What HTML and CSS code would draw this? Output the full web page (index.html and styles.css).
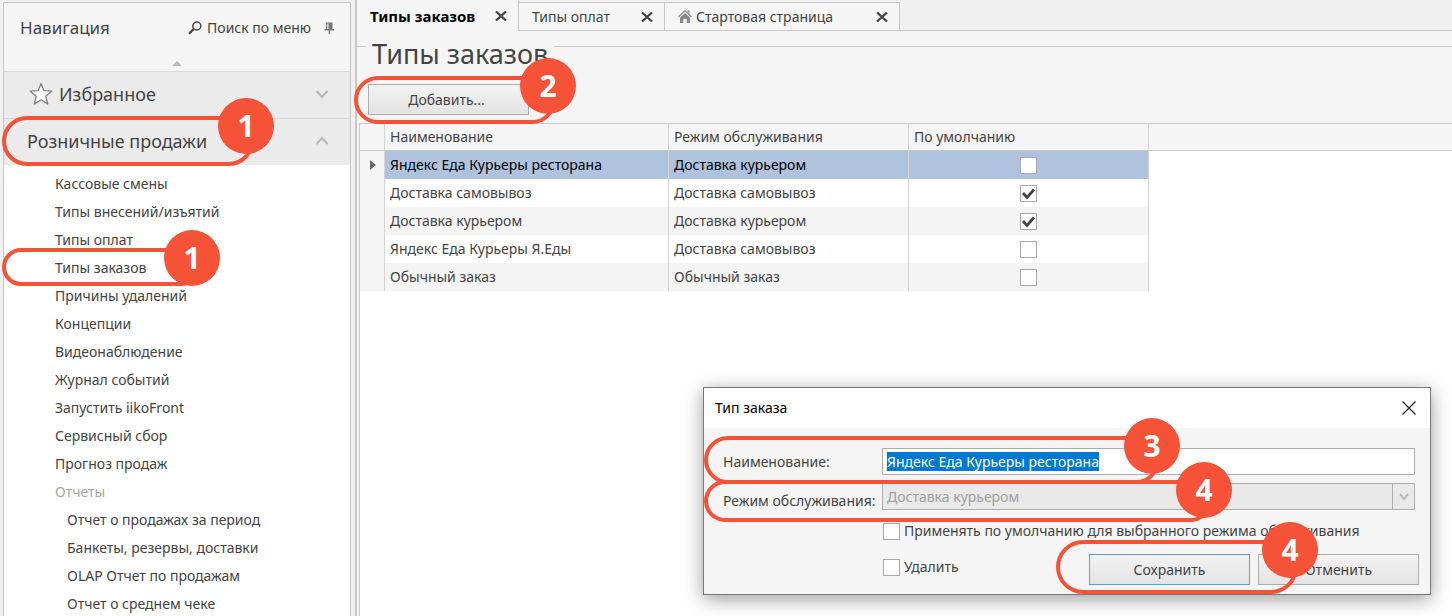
FILE: index.html
```html
<!DOCTYPE html>
<html lang="ru">
<head>
<meta charset="utf-8">
<title>Типы заказов</title>
<link rel="stylesheet" href="styles.css">
</head>
<body>
<div class="app">
  <aside class="sidebar">
    <header class="sidebar-head">
      <h2 class="sidebar-title">Навигация</h2>
      <button class="menu-search" type="button">
        <svg width="14" height="14" viewBox="0 0 14 14" fill="none" stroke="#444"><circle cx="8.800" cy="5" r="4" stroke-width="1.500"/><path d="M5.800 8 1 12.800" stroke-width="2.200"/></svg>
        Поиск по меню
      </button>
      <button class="pin" type="button" aria-label="Закрепить">
        <svg width="10" height="12" viewBox="0 0 10 12"><path d="M2 .5h6.500v6.500H10v1.500H.5V7H2z" fill="#777"/><path d="M3.200 1.500h1.300V7H3.200z" fill="#eee"/><path d="M4.700 8h1.200v4H4.700z" fill="#777"/></svg>
      </button>
      <svg class="scroll-up" width="10" height="5" viewBox="0 0 10 5"><path d="M0 5 5 0l5 5z" fill="#b9b9b9"/></svg>
    </header>
    <button class="section" type="button">
      <svg class="star" width="24" height="24" viewBox="0 0 24 24"><path d="m12 1.500 2.900 7.200 7.800.5-6 5 2 7.800L12 17.800 5.300 22l2-7.800-6-5 7.800-.5z" fill="#fff" stroke="#808080" stroke-width="1.300" stroke-linejoin="round"/></svg>
      <span>Избранное</span>
      <svg class="chevron" width="14" height="10" viewBox="0 0 14 10"><path d="m1.500 2 5.500 6 5.500-6" fill="none" stroke="#b8b8b8" stroke-width="2"/></svg>
    </button>
    <button class="section section-open" type="button">
      <span>Розничные продажи</span>
      <svg class="chevron" width="14" height="10" viewBox="0 0 14 10"><path d="m1.500 8 5.500-6 5.500 6" fill="none" stroke="#b8b8b8" stroke-width="2"/></svg>
      <span class="callout callout-section"><b class="badge">1</b></span>
    </button>
    <ul class="menu">
      <li><a href="#">Кассовые смены</a></li>
      <li><a href="#">Типы внесений/изъятий</a></li>
      <li><a href="#">Типы оплат</a></li>
      <li class="marked"><a href="#">Типы заказов</a><span class="callout callout-item"><b class="badge">1</b></span></li>
      <li><a href="#">Причины удалений</a></li>
      <li><a href="#">Концепции</a></li>
      <li><a href="#">Видеонаблюдение</a></li>
      <li><a href="#">Журнал событий</a></li>
      <li><a href="#">Запустить iikoFront</a></li>
      <li><a href="#">Сервисный сбор</a></li>
      <li><a href="#">Прогноз продаж</a></li>
      <li class="group">Отчеты</li>
      <li class="sub"><a href="#">Отчет о продажах за период</a></li>
      <li class="sub"><a href="#">Банкеты, резервы, доставки</a></li>
      <li class="sub"><a href="#">OLAP Отчет по продажам</a></li>
      <li class="sub"><a href="#">Отчет о среднем чеке</a></li>
    </ul>
  </aside>

  <main class="main">
    <nav class="tabs">
      <div class="tab tab-active"><a href="#">Типы заказов</a><button type="button" aria-label="Закрыть"><svg width="12" height="10" viewBox="0 0 12 10"><path d="m1 .5 10 9m0-9-10 9" stroke="#444" stroke-width="2.200"/></svg></button></div>
      <div class="tab tab-pay"><a href="#">Типы оплат</a><button type="button" aria-label="Закрыть"><svg width="12" height="10" viewBox="0 0 12 10"><path d="m1 .5 10 9m0-9-10 9" stroke="#444" stroke-width="2.200"/></svg></button></div>
      <div class="tab tab-start"><svg class="home" width="14" height="15" viewBox="0 0 14 15"><path d="M0 7.500 7 .5l2.500 2.500V1.200h2v3.700L14 7.500l-1 1-6-5.800L1 8.500z" fill="#999"/><path d="m2 8.800 5-4.800 5 4.800V14H8.700v-4H5.300v4H2z" fill="#888"/></svg><a href="#">Стартовая страница</a><button type="button" aria-label="Закрыть"><svg width="12" height="10" viewBox="0 0 12 10"><path d="m1 .5 10 9m0-9-10 9" stroke="#444" stroke-width="2.200"/></svg></button></div>
    </nav>
    <section class="panel">
      <h1 class="panel-title">Типы заказов</h1>
      <div class="toolbar">
        <button class="btn btn-add" type="button">Добавить...</button>
        <span class="callout callout-add"><b class="badge">2</b></span>
      </div>
      <div class="grid-wrap">
        <table class="grid">
          <colgroup><col class="c-mark"><col class="c-name"><col class="c-mode"><col class="c-default"><col></colgroup>
          <thead><tr><th></th><th>Наименование</th><th>Режим обслуживания</th><th>По умолчанию</th><th></th></tr></thead>
          <tbody>
            <tr class="selected"><td><svg width="6" height="10" viewBox="0 0 6 10"><path d="M0 0l6 5-6 5z" fill="#666"/></svg></td><td>Яндекс Еда Курьеры ресторана</td><td>Доставка курьером</td><td><input type="checkbox" aria-label="По умолчанию"></td><td></td></tr>
            <tr><td></td><td>Доставка самовывоз</td><td>Доставка самовывоз</td><td><input type="checkbox" aria-label="По умолчанию" checked></td><td></td></tr>
            <tr><td></td><td>Доставка курьером</td><td>Доставка курьером</td><td><input type="checkbox" aria-label="По умолчанию" checked></td><td></td></tr>
            <tr><td></td><td>Яндекс Еда Курьеры Я.Еды</td><td>Доставка самовывоз</td><td><input type="checkbox" aria-label="По умолчанию"></td><td></td></tr>
            <tr><td></td><td>Обычный заказ</td><td>Обычный заказ</td><td><input type="checkbox" aria-label="По умолчанию"></td><td></td></tr>
          </tbody>
        </table>
      </div>
    </section>
  </main>

  <form class="dialog" role="dialog" aria-labelledby="dlg-title">
    <header class="dialog-head">
      <h2 id="dlg-title">Тип заказа</h2>
      <button type="button" aria-label="Закрыть"><svg width="14" height="14" viewBox="0 0 14 14"><path d="m.5.5 13 13m0-13-13 13" stroke="#222" stroke-width="1.300"/></svg></button>
    </header>
    <div class="dialog-body">
      <div class="field">
        <label for="name">Наименование:</label>
        <input class="text" id="name" type="text" value="Яндекс Еда Курьеры ресторана">
        <span class="callout callout-name"><b class="badge">3</b></span>
      </div>
      <div class="field">
        <label class="label-mode" for="mode">Режим обслуживания:</label>
        <div class="select">
          <select id="mode" disabled><option>Доставка курьером</option></select>
          <span class="select-arrow"><svg width="10" height="8" viewBox="0 0 10 8"><path d="m1 1 4 5 4-5" fill="none" stroke="#b5b5b5" stroke-width="2"/></svg></span>
        </div>
        <span class="callout callout-mode"><b class="badge">4</b></span>
      </div>
      <label class="check check-default"><input type="checkbox">Применять по умолчанию для выбранного режима обслуживания</label>
      <div class="actions">
        <label class="check"><input type="checkbox">Удалить</label>
        <div class="buttons">
          <button class="btn btn-primary" type="button">Сохранить</button>
          <button class="btn" type="button">Отменить</button>
          <span class="callout callout-save"><b class="badge">4</b></span>
        </div>
      </div>
    </div>
  </form>
</div>
<script src="script.js"></script>
</body>
</html>
```
FILE: styles.css
```css
* { box-sizing: border-box; }
body {
  margin: 0;
  background: #f0f0f0;
  color: #444;
  font: 14px/18px "Noto Sans", "Open Sans", sans-serif;
}
button, input, select { font: inherit; color: inherit; }
button { background: none; border: 0; padding: 0; }
a { color: inherit; text-decoration: none; }
h1, h2 { margin: 0; font-weight: 400; }
svg { display: block; flex: none; }

.app { position: relative; display: flex; height: 100vh; overflow: hidden; }

/* navigation */
.sidebar {
  flex: none;
  width: 348px;
  margin: 2px 4px 0 3px;
  border: 1px solid #c6c6c6;
  border-width: 1px 1px 0 1px;
  background: #fff;
}
.sidebar-head {
  display: grid;
  grid-template-columns: 1fr auto auto;
  align-items: center;
  row-gap: 22px;
  padding: 14px 16px 5px;
  background: #f5f5f5;
}
.sidebar-title { font-size: 17px; line-height: 22px; }
.menu-search { display: flex; align-items: center; gap: 5px; }
.pin { margin-left: 13px; }
.scroll-up { grid-column: 1 / -1; justify-self: center; }
.section {
  position: relative;
  display: flex;
  align-items: center;
  width: 100%;
  height: 47px;
  padding: 0 21px 2px 25px;
  border-top: 1px solid #d9d9d9;
  background: #ebebeb;
  font-size: 18px;
  line-height: 24px;
  text-align: left;
}
.section-open { padding-left: 23px; }
.star { margin-right: 6px; }
.chevron { margin-left: auto; }
.menu { margin: 0; padding: 5px 0 0; list-style: none; }
.menu li { height: 28px; padding-left: 51px; line-height: 28px; }
.menu .sub { padding-left: 63px; }
.menu .group { color: #a5a5a5; }
.marked { position: relative; }

/* tabs */
.main {
  flex: 1;
  min-width: 0;
  display: flex;
  flex-direction: column;
  border-left: 2px solid #c6c6c6;
  background: #f5f5f5;
}
.tabs {
  display: flex;
  align-items: flex-end;
  height: 31px;
  background: #f0f0f0;
  box-shadow: inset 0 -1px #c8c8c8;
}
.tab {
  display: flex;
  align-items: center;
  height: 29px;
  padding: 0 11px 0 13px;
  border: 1px solid #c8c8c8;
  border-left: 0;
  background: #f5f5f5;
}
.tab button { margin-left: auto; }
.tab-active {
  width: 162px;
  height: 31px;
  border-width: 0 1px 0 0;
  color: #000;
  font-size: 15px;
  font-weight: 700;
}
.tab-pay { width: 146px; }
.tab-start { width: 235px; }
.home { margin-right: 4px; }

/* panel */
.panel { flex: 1; display: flex; flex-direction: column; padding-top: 15px; }
.panel-title {
  display: flex;
  gap: 6px;
  height: 38px;
  font-size: 27px;
  line-height: 16px;
}
.panel-title::before, .panel-title::after { content: ""; width: 9px; border-top: 1px solid #c8c8c8; }
.panel-title::after { flex: 1; }
.toolbar { position: relative; padding: 0 0 8px 11px; }
.btn {
  width: 161px;
  height: 31px;
  border: 1px solid #adadad;
  background: linear-gradient(#f2f2f2, #e4e4e4);
}
.btn-add { padding-right: 4px; }
.grid-wrap { flex: 1; margin-left: 2px; border-left: 1px solid #c8c8c8; background: #fff; }
.grid { width: 100%; border-collapse: separate; border-spacing: 0; table-layout: fixed; }
.c-mark { width: 25px; }
.c-name { width: 284px; }
.c-mode { width: 240px; }
.c-default { width: 240px; }
.grid th, .grid td { height: 28px; padding: 0 5px; border-right: 1px solid #d4d4d4; text-align: left; }
.grid th { border-top: 1px solid #c8c8c8; border-bottom: 1px solid #c8c8c8; background: #f5f5f5; font-weight: 400; }
.grid th:last-child, .grid td:last-child { border-right: 0; }
.grid tbody tr:nth-child(odd) td { background: #f4f4f4; }
.grid tbody tr.selected td { background: #b0c3de; color: #000; }
.grid tbody tr td:first-child, .grid tbody tr.selected td:first-child { padding-left: 10px; background: #f5f5f5; }
.grid tbody tr td:last-child, .grid tbody tr.selected td:last-child { background: #fff; }
.grid td:nth-child(4) { text-align: center; }

input[type="checkbox"] {
  appearance: none;
  flex: none;
  width: 17px;
  height: 17px;
  margin: 0;
  border: 1px solid #a8a8a8;
  background: #fff;
  vertical-align: middle;
}
.grid input[type="checkbox"] { display: block; margin: 0 auto; }
input[type="checkbox"]:checked {
  background: #fff url("data:image/svg+xml,%3Csvg xmlns='http://www.w3.org/2000/svg' viewBox='0 0 15 15'%3E%3Cpath d='M2 7l4 4.500 7-8' fill='none' stroke='%23444' stroke-width='2.800'/%3E%3C/svg%3E") center / 15px no-repeat;
}

/* dialog */
.dialog {
  position: absolute;
  top: 387px;
  right: 21px;
  width: 728px;
  border: 1px solid #777;
  background: #f5f5f5;
  box-shadow: 0 4px 18px rgba(0, 0, 0, .4);
}
.dialog-head {
  display: flex;
  align-items: center;
  justify-content: space-between;
  height: 40px;
  padding: 0 14px 0 11px;
  background: #fff;
  color: #000;
}
.dialog-head h2 { font-size: 14px; }
.dialog-body { display: flex; flex-direction: column; padding: 20px 11px 9px 19px; }
.field {
  position: relative;
  display: grid;
  grid-template-columns: 159px 1fr;
  align-items: center;
  margin: 0 4px 8px 0;
}
.label-mode { padding-top: 8px; }
.text { height: 27px; padding: 0 4px; border: 1px solid #adadad; border-radius: 0; background: #fff; outline: 0; }
.text::selection { background: #0078d7; color: #fff; }
.select { position: relative; }
.select select {
  display: block;
  width: 100%;
  height: 27px;
  padding: 0 24px 0 4px;
  border: 1px solid #adadad;
  border-radius: 0;
  background: #e9e9e9;
  color: #a0a0a0;
  opacity: 1;
  appearance: none;
}
.select-arrow {
  position: absolute;
  inset: 1px 1px 1px auto;
  display: grid;
  place-items: center;
  width: 22px;
  border-left: 1px solid #adadad;
}
.check { display: flex; align-items: center; gap: 4px; margin-left: 160px; }
.check-default { margin-top: 4px; }
.actions { display: flex; justify-content: space-between; align-items: flex-start; margin-top: 14px; }
.actions .check { padding-top: 4px; }
.buttons { position: relative; display: flex; gap: 8px; }
.btn-primary { border-color: #569de5; }

/* numbered callouts */
.callout {
  position: absolute;
  z-index: 1;
  border: 4px solid #f65237;
  border-radius: 28px;
  pointer-events: none;
}
.badge {
  position: absolute;
  top: -22px;
  right: -24px;
  display: grid;
  place-items: center;
  width: 56px;
  height: 56px;
  border-radius: 50%;
  background: #f65237;
  color: #fff;
  font-size: 30px;
  line-height: 30px;
}
.callout-section { left: -2px; top: -3px; width: 252px; height: 50px; }
.callout-item { left: -2px; top: -6px; width: 198px; height: 38px; }
.callout-add { left: -3px; top: -8px; width: 202px; height: 48px; }
.callout-name { left: -19px; top: -12px; width: 456px; height: 48px; }
.callout-mode { left: -19px; top: -3px; width: 508px; height: 42px; }
.callout-save { left: -33px; top: -14px; width: 242px; height: 54px; }
```
FILE: script.js
```js
const nameInput = document.getElementById("name");
nameInput.focus();
nameInput.select();
```
